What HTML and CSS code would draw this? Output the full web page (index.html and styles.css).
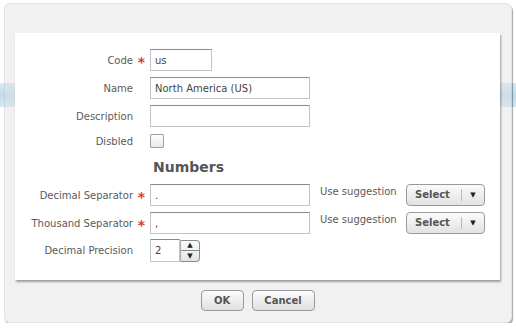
FILE: index.html
```html
<!DOCTYPE html>
<html lang="en">
<head>
    <meta charset="UTF-8">
    <title>Edit Region</title>
    <link rel="stylesheet" href="styles.css">
</head>
<body>
    <div class="backdrop-bar"></div>

    <div class="dialog">
        <div class="panel">
            <div class="row">
                <span class="label">Code</span><span class="req">*</span>
                <input class="field field-code" type="text" value="us">
            </div>
            <div class="row">
                <span class="label">Name</span><span class="req"></span>
                <input class="field" type="text" value="North America (US)">
            </div>
            <div class="row">
                <span class="label">Description</span><span class="req"></span>
                <input class="field" type="text" value="">
            </div>
            <div class="row row-check">
                <span class="label">Disbled</span><span class="req"></span>
                <span class="checkbox"></span>
            </div>

            <h2 class="section-title">Numbers</h2>

            <div class="row">
                <span class="label">Decimal Separator</span><span class="req">*</span>
                <input class="field" type="text" value=".">
                <span class="hint">Use suggestion</span>
                <div class="split-btn">
                    <span class="split-main">Select</span>
                    <span class="split-arrow">&#9660;</span>
                </div>
            </div>
            <div class="row row-tight">
                <span class="label">Thousand Separator</span><span class="req">*</span>
                <input class="field" type="text" value=",">
                <span class="hint">Use suggestion</span>
                <div class="split-btn">
                    <span class="split-main">Select</span>
                    <span class="split-arrow">&#9660;</span>
                </div>
            </div>
            <div class="row row-spin">
                <span class="label">Decimal Precision</span><span class="req"></span>
                <input class="field field-num" type="text" value="2">
                <div class="spinner">
                    <span class="spin-up">&#9650;</span>
                    <span class="spin-down">&#9660;</span>
                </div>
            </div>
        </div>

        <div class="actions">
            <button class="btn btn-ok">OK</button>
            <button class="btn btn-cancel">Cancel</button>
        </div>
    </div>
</body>
</html>
```

FILE: styles.css
```css
body {
    margin: 0;
    background: #fff;
    font-family: "DejaVu Sans", Verdana, sans-serif;
    font-size: 10px;
    color: #5a5a5a;
    position: relative;
}

.backdrop-bar {
    position: absolute;
    top: 83px;
    left: 0;
    right: 0;
    height: 24px;
    background: linear-gradient(#d6eaf3, #bfdcea 50%, #d3e8f1);
    z-index: 0;
}

.dialog {
    position: relative;
    z-index: 1;
    margin: 3px 4px 0;
    height: 320px;
    box-sizing: border-box;
    padding: 30px 11px 0 11px;
    background: rgba(224, 224, 224, 0.45);
    border: 1px solid rgba(0, 0, 0, 0.06);
    border-radius: 6px;
    box-shadow: 1px 2px 1px rgba(0, 0, 0, 0.35);
}

.panel {
    background: #fff;
    height: 247px;
    box-sizing: border-box;
    padding-top: 16px;
    margin-top: -1px;
    margin-left: -1px;
    box-shadow: 1px 2px 2px rgba(0, 0, 0, 0.35);
}

.row {
    display: flex;
    align-items: center;
    height: 22px;
    margin-bottom: 6px;
}

.row-tight {
    margin-bottom: 5px;
}

.row-check {
    height: 16px;
    margin-bottom: 0;
}

.row-spin {
    height: 23px;
}

.label {
    width: 118px;
    text-align: right;
    color: #5a5a5a;
}

.req {
    width: 17px;
    text-align: center;
    color: #d63a3a;
    font-size: 14px;
    font-weight: bold;
    line-height: 1;
    padding-top: 3px;
}

.field {
    box-sizing: border-box;
    width: 160px;
    height: 100%;
    margin: 0;
    padding: 0 4px;
    border: 1px solid #c4c4c4;
    border-top-color: #8a8a8a;
    font-family: "DejaVu Sans", Verdana, sans-serif;
    font-size: 10px;
    color: #444;
    background: #fff;
    outline: none;
}

.field-code {
    width: 62px;
}

.field-num {
    width: 30px;
}

.checkbox {
    width: 12px;
    height: 12px;
    border: 1px solid #a0a0a0;
    border-radius: 1px;
    background: linear-gradient(#fdfdfd, #e8e8e8);
}

.section-title {
    margin: 10px 0 9px 138px;
    font-size: 14px;
    line-height: 16px;
    font-weight: bold;
    color: #555;
}

.hint {
    width: 86px;
    padding-left: 10px;
    align-self: flex-start;
    padding-top: 2px;
    color: #5a5a5a;
}

.split-btn {
    display: flex;
    align-items: center;
    box-sizing: border-box;
    width: 79px;
    height: 22px;
    border: 1px solid #9a9a9a;
    border-radius: 4px;
    background: linear-gradient(#fbfbfb, #e2e2e2);
}

.split-main {
    width: 55px;
    padding-left: 8px;
    box-sizing: border-box;
    font-weight: bold;
    color: #555;
    border-right: 1px solid #b8b8b8;
    line-height: 12px;
}

.split-arrow {
    flex: 1;
    text-align: center;
    font-size: 7px;
    color: #222;
}

.spinner {
    display: flex;
    flex-direction: column;
    box-sizing: border-box;
    width: 20px;
    height: 22px;
    border: 1px solid #8a8a8a;
    border-left-color: #aaa;
    border-radius: 0 4px 4px 0;
    background: linear-gradient(#fbfbfb, #e4e4e4);
    overflow: hidden;
}

.spin-up,
.spin-down {
    flex: 1;
    display: flex;
    align-items: center;
    justify-content: center;
    font-size: 7px;
    color: #222;
}

.spin-up {
    border-bottom: 1px solid #8a8a8a;
}

.actions {
    display: flex;
    justify-content: center;
    gap: 8px;
    margin-top: 10px;
    margin-left: -1px;
}

.btn {
    height: 21px;
    margin: 0;
    padding: 0;
    border: 1px solid #9a9a9a;
    border-radius: 4px;
    background: linear-gradient(#fbfbfb, #e0e0e0);
    font-family: "DejaVu Sans", Verdana, sans-serif;
    font-size: 10px;
    font-weight: bold;
    color: #555;
}

.btn-ok {
    width: 43px;
}

.btn-cancel {
    width: 63px;
}
```
